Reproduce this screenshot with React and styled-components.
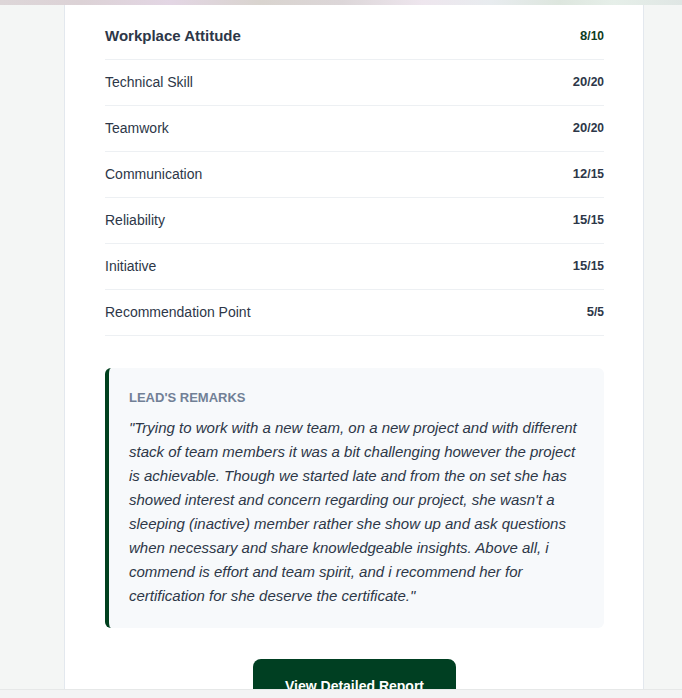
import React from "react";
import styled, { createGlobalStyle } from "styled-components";

const Global = createGlobalStyle`
  html, body { margin: 0; padding: 0; }
  body {
    background: #f4f6f5;
    font-family: "Liberation Sans", Arial, sans-serif;
    overflow: hidden;
  }
`;

const Banner = styled.div`
  height: 5px;
  background: linear-gradient(90deg, #ddd6d8 0%, #dcd2d6 12%, #e3d6e4 25%, #d9d4cf 38%, #dcd6d8 50%, #eee6ee 62%, #e8ecef 72%, #dde6de 82%, #e6efe9 90%, #dfe6e4 100%);
`;

const Page = styled.div`
  display: flex;
  justify-content: flex-start;
  padding-left: 64px;
`;

const Card = styled.div`
  width: 580px;
  box-sizing: border-box;
  background: #ffffff;
  border-left: 1px solid #e3e8ee;
  border-right: 1px solid #e3e8ee;
  padding: 9px 39px 40px 40px;
  min-height: 700px;
`;

const Row = styled.div`
  display: flex;
  justify-content: space-between;
  align-items: center;
  padding: 11px 0 13px;
  height: 21px;
  line-height: 20px;
  border-bottom: 1px solid #edf0f3;
`;

const Label = styled.span`
  font-size: ${p => (p.$head ? "15px" : "14px")};
  font-weight: ${p => (p.$head ? 700 : 400)};
  color: #2d3748;
`;

const Score = styled.span`
  font-weight: 700;
  color: ${p => (p.$head ? "#0d3b22" : "#2d3748")};
  font-size: 13px;
`;

const Total = styled.span`
  font-size: 12px;
`;

const Remarks = styled.div`
  margin-top: 32px;
  background: #f7f9fb;
  border-left: 4px solid #00401e;
  border-radius: 6px;
  padding: 20px 24px 20px 20px;
`;

const RemarksTitle = styled.div`
  font-size: 13px;
  font-weight: 700;
  color: #718096;
  text-transform: uppercase;
  line-height: 18px;
  margin-bottom: 9px;
  margin-top: 1px;
`;

const Quote = styled.p`
  margin: 0;
  font-style: italic;
  font-size: 15px;
  line-height: 24px;
  color: #2d3748;
`;

const ButtonWrap = styled.div`
  display: flex;
  justify-content: center;
  margin-top: 31px;
`;

const Button = styled.button`
  background: #003f22;
  color: #ffffff;
  border: none;
  border-radius: 8px;
  padding: 19px 32px;
  font-family: "Liberation Sans", Arial, sans-serif;
  font-weight: 700;
  font-size: 14px;
  cursor: pointer;
`;

const BottomBar = styled.div`
  position: fixed;
  left: 0;
  right: 0;
  bottom: 0;
  height: 8px;
  background: #f3f4f4;
  border-top: 1px solid #e6e8e8;
`;

const rows = [
  ["Workplace Attitude", 8, 10, true],
  ["Technical Skill", 20, 20],
  ["Teamwork", 20, 20],
  ["Communication", 12, 15],
  ["Reliability", 15, 15],
  ["Initiative", 15, 15],
  ["Recommendation Point", 5, 5],
];

export default function App() {
  return (
    <>
      <Global />
      <Banner />
      <Page>
        <Card>
          {rows.map(([name, s, t, head]) => (
            <Row key={name}>
              <Label $head={head}>{name}</Label>
              <Score $head={head}>
                {s}
                <Total>/{t}</Total>
              </Score>
            </Row>
          ))}
          <Remarks>
            <RemarksTitle>Lead's Remarks</RemarksTitle>
            <Quote>
              "Trying to work with a new team, on a new project and with different stack of team members it was a bit challenging however the project is achievable. Though we started late and from the on set she has showed interest and concern regarding our project, she wasn't a sleeping (inactive) member rather she show up and ask questions when necessary and share knowledgeable insights. Above all, i commend is effort and team spirit, and i recommend her for certification for she deserve the certificate."
            </Quote>
          </Remarks>
          <ButtonWrap>
            <Button>View Detailed Report</Button>
          </ButtonWrap>
        </Card>
      </Page>
      <BottomBar />
    </>
  );
}
